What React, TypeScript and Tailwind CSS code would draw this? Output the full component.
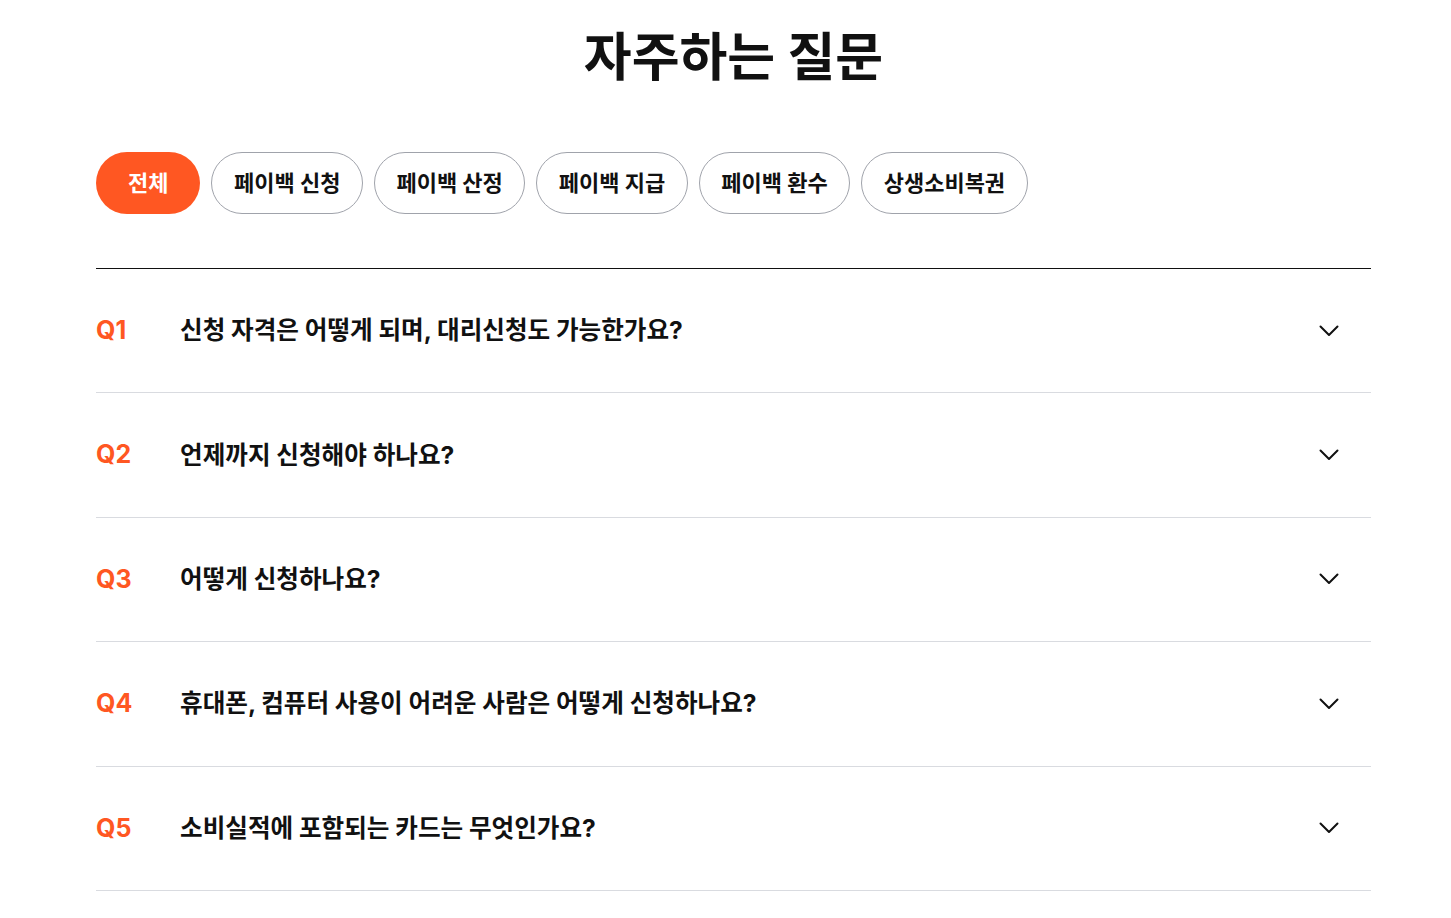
const tabs = ["전체", "페이백 신청", "페이백 산정", "페이백 지급", "페이백 환수", "상생소비복권"];

const faqs = [
  "신청 자격은 어떻게 되며, 대리신청도 가능한가요?",
  "언제까지 신청해야 하나요?",
  "어떻게 신청하나요?",
  "휴대폰, 컴퓨터 사용이 어려운 사람은 어떻게 신청하나요?",
  "소비실적에 포함되는 카드는 무엇인가요?",
];

function Chevron() {
  return (
    <svg width="20" height="12" viewBox="0 0 20 12" fill="none" stroke="#111" strokeWidth="2" strokeLinecap="round" strokeLinejoin="round">
      <path d="M1.5 1.5 L10 10 L18.5 1.5" />
    </svg>
  );
}

export default function App() {
  return (
    <div className="min-h-screen bg-white font-['Inter','Noto_Sans_CJK_KR',sans-serif] text-[#111]">
      <div className="ml-[96px] mr-[80px] pt-[24px]">
        <h1 className="text-center text-[52px] font-bold leading-[68px]">자주하는 질문</h1>

        <div className="mt-[60px] flex gap-[11px]">
          {tabs.map((t, i) => (
            <button
              key={t}
              className={
                i === 0
                  ? "h-[62px] rounded-full bg-[#ff5722] px-[32px] text-[22px] font-bold text-white"
                  : "h-[62px] rounded-full border border-[#a0a3ab] bg-white px-[21.5px] text-[22px] font-bold text-[#111]"
              }
            >
              {t}
            </button>
          ))}
        </div>

        <div className="mt-[54px] border-t border-[#111]">
          {faqs.map((q, i) => (
            <div key={i} className="flex h-[124.4px] items-center border-b border-[#d9dbe0] pr-[32px]">
              <span className="w-[84px] text-[25px] font-bold text-[#ff5722]">Q{i + 1}</span>
              <span className="flex-1 text-[24.6px] font-bold">{q}</span>
              <Chevron />
            </div>
          ))}
        </div>
      </div>
    </div>
  );
}
